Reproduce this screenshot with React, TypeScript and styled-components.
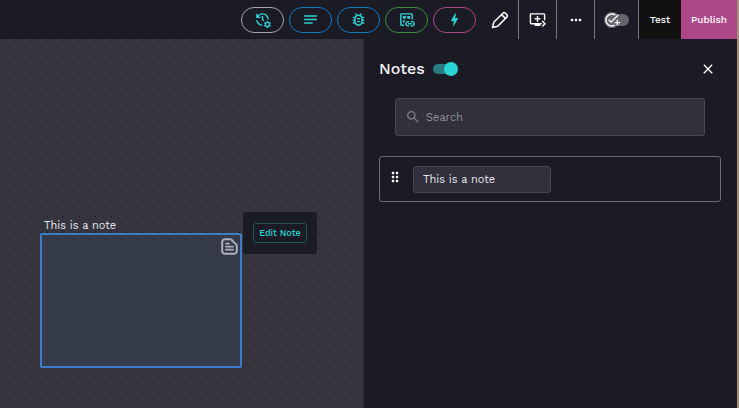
import React from 'react';
import styled, { createGlobalStyle } from 'styled-components';
import {
  MdManageHistory,
  MdNotes,
  MdOutlineBugReport,
  MdOutlineDatasetLinked,
  MdBolt,
  MdQueuePlayNext,
  MdMoreHoriz,
  MdAddTask,
  MdSearch,
  MdClose,
  MdDragIndicator,
} from 'react-icons/md';

const GlobalStyle = createGlobalStyle`
  * { box-sizing: border-box; }
  body { margin: 0; background: #1b1b25; }
  button, input { font-family: inherit; margin: 0; }
  button { cursor: pointer; padding: 0; }
`;

const Page = styled.div`
  display: flex;
  flex-direction: column;
  min-height: 100vh;
  overflow: hidden;
  color: #f4f4f8;
  background: #1b1b25;
  border-right: 2px solid #a09373;
  font-family: 'Work Sans', Inter, 'Liberation Sans', sans-serif;
`;

const Header = styled.header`
  display: flex;
  justify-content: flex-end;
  height: 39px;
`;

const Pills = styled.div`
  display: flex;
  align-items: center;
  gap: 5px;
`;

const Pill = styled.button<{ $color: string }>`
  display: grid;
  place-items: center;
  width: 43px;
  height: 26px;
  border: 1px solid ${(p) => p.$color};
  border-radius: 13px;
  background: transparent;
  color: #2ad4d4;
`;

const Tool = styled.button<{ $wide?: boolean }>`
  display: grid;
  place-items: center;
  width: ${(p) => (p.$wide ? 44 : 38)}px;
  border: 0;
  border-right: 1px solid #777781;
  background: transparent;
  color: #fff;
`;

const PencilTool = styled(Tool)`
  margin-left: 5px;
`;

const TaskSwitch = styled.span`
  display: flex;
  align-items: center;
  width: 24px;
  height: 12px;
  border-radius: 6px;
  background: #64646a;
`;

const TaskKnob = styled.span`
  display: grid;
  place-items: center;
  flex: none;
  width: 16px;
  height: 16px;
  margin-left: -1px;
  border-radius: 50%;
  background: #66666c;
`;

const Action = styled.button<{ $primary?: boolean }>`
  width: ${(p) => (p.$primary ? 56 : 42)}px;
  border: 0;
  background: ${(p) => (p.$primary ? '#ad4788' : '#111112')};
  color: #fff;
  font-size: 10px;
  font-weight: 500;
`;

const Body = styled.div`
  display: flex;
  flex: 1;
`;

const Canvas = styled.main`
  position: relative;
  flex: 1;
  background-color: #36353f;
  background-image:
    conic-gradient(from 90deg at 15px 15px, #1c1c26 90deg, transparent 0),
    conic-gradient(from 90deg at 14px 14px, #2d2c37 90deg, transparent 0);
  background-position: 0 2px;
  background-size: 16px 16px;
`;

const NoteNode = styled.section`
  position: absolute;
  left: 40px;
  top: 178px;
  width: 202px;
`;

const NoteLabel = styled.div`
  padding: 1px 0 0 4px;
  font-size: 11px;
  line-height: 15px;
  color: #e6e6ea;
`;

const NoteArea = styled.div`
  display: flex;
  justify-content: flex-end;
  height: 135px;
  padding: 3px 2px;
  border: 2px solid #3d7dc8;
  border-radius: 2px;
  background: rgba(52, 66, 84, 0.5);
  color: #aeb0bd;
`;

const NodeMenu = styled.div`
  position: absolute;
  left: 243px;
  top: 173px;
  padding: 11px 10px;
  border-radius: 3px;
  background: #1b1b25;
`;

const EditButton = styled.button`
  display: block;
  width: 54px;
  height: 20px;
  border: 1px solid #23555e;
  border-radius: 3px;
  background: transparent;
  color: #2ad4d4;
  font-size: 9px;
  font-weight: 500;
  white-space: nowrap;
`;

const Panel = styled.aside`
  width: 374px;
  padding: 19px 16px 0 15px;
  border-left: 1px solid #2c2b36;
  background: #1b1b25;
`;

const PanelHeader = styled.div`
  display: flex;
  align-items: center;
  height: 22px;
  padding-right: 5px;
`;

const Title = styled.h2`
  margin: 0 8px 0 0;
  font-size: 16px;
  line-height: 22px;
  font-weight: 500;
`;

const Toggle = styled.input`
  appearance: none;
  position: relative;
  width: 25px;
  height: 14px;
  margin: 0;
  &::before {
    content: '';
    position: absolute;
    inset: 2px 1px 2px 0;
    border-radius: 5px;
    background: #2a7c82;
  }
  &::after {
    content: '';
    position: absolute;
    right: 0;
    top: 0;
    width: 14px;
    height: 14px;
    border-radius: 50%;
    background: #2ad4d4;
  }
  &:not(:checked)::after {
    right: auto;
    left: 0;
  }
`;

const CloseButton = styled.button`
  display: grid;
  place-items: center;
  margin-left: auto;
  border: 0;
  background: transparent;
  color: #fff;
`;

const SearchBox = styled.label`
  display: flex;
  align-items: center;
  gap: 5px;
  height: 38px;
  margin: 18px 16px 0;
  padding: 0 9px;
  border: 1px solid #484753;
  border-radius: 3px;
  background: #32303d;
  color: #7f7e88;
`;

const SearchInput = styled.input`
  flex: 1;
  min-width: 0;
  padding: 0;
  border: 0;
  outline: 0;
  background: transparent;
  color: #e6e6ea;
  font-size: 11px;
  &::placeholder {
    color: #8f8e98;
    opacity: 1;
  }
`;

const NoteRow = styled.div`
  display: flex;
  align-items: center;
  gap: 10px;
  height: 46px;
  margin-top: 20px;
  padding: 0 7px;
  border: 1px solid #6b6b77;
  border-radius: 3px;
`;

const DragHandle = styled.button`
  display: flex;
  align-items: center;
  justify-content: center;
  width: 16px;
  height: 22px;
  padding-bottom: 4px;
  border: 0;
  background: transparent;
  color: #fff;
`;

const NoteInput = styled.input`
  width: 138px;
  height: 27px;
  padding: 0 9px;
  border: 1px solid #484753;
  border-radius: 3px;
  background: #32303d;
  color: #e6e6ea;
  font-size: 11px;
`;

const Pencil = () => (
  <svg width="18" height="18" viewBox="0 0 18 18" fill="none" stroke="currentColor" strokeWidth="1.5" strokeLinejoin="round" aria-hidden="true">
    <path d="M1.5 16.5l1.3-5.2L11.9 2.2c.8-.8 1.6-.8 2.2-.2l1.9 1.9c.6.6.6 1.4-.2 2.2l-9.1 9.1z" />
    <path d="M10.6 3.6l3.8 3.8" />
  </svg>
);

const NoteIcon = () => (
  <svg width="17" height="17" viewBox="0 0 17 17" fill="none" stroke="currentColor" strokeWidth="2" strokeLinecap="round" strokeLinejoin="round" aria-hidden="true">
    <path d="M4 1.2h5.2c.5 0 .9.2 1.2.5l4.9 4.9c.3.3.5.7.5 1.2v5.2a2.8 2.8 0 0 1-2.8 2.8H4A2.8 2.8 0 0 1 1.2 13V4A2.8 2.8 0 0 1 4 1.2z" />
    <path d="M5 5.6h3M5 8.6h7M5 11.7h7" strokeWidth="1.8" />
  </svg>
);

export default function App() {
  return (
    <Page>
      <GlobalStyle />
      <Header>
        <Pills>
          <Pill $color="#a6a6ac" aria-label="History"><MdManageHistory size={17} /></Pill>
          <Pill $color="#1379bd" aria-label="Logs"><MdNotes size={17} /></Pill>
          <Pill $color="#1379bd" aria-label="Debug"><MdOutlineBugReport size={17} /></Pill>
          <Pill $color="#3c8d3b" aria-label="Data"><MdOutlineDatasetLinked size={17} /></Pill>
          <Pill $color="#ad4788" aria-label="Actions"><MdBolt size={17} /></Pill>
        </Pills>
        <PencilTool aria-label="Edit"><Pencil /></PencilTool>
        <Tool aria-label="Add screen"><MdQueuePlayNext size={17} /></Tool>
        <Tool aria-label="More"><MdMoreHoriz size={16} /></Tool>
        <Tool $wide aria-label="Tasks">
          <TaskSwitch><TaskKnob><MdAddTask size={16} /></TaskKnob></TaskSwitch>
        </Tool>
        <Action>Test</Action>
        <Action $primary>Publish</Action>
      </Header>
      <Body>
        <Canvas>
          <NoteNode>
            <NoteLabel>This is a note</NoteLabel>
            <NoteArea><NoteIcon /></NoteArea>
          </NoteNode>
          <NodeMenu><EditButton>Edit Note</EditButton></NodeMenu>
        </Canvas>
        <Panel>
          <PanelHeader>
            <Title>Notes</Title>
            <Toggle type="checkbox" defaultChecked aria-label="Show notes" />
            <CloseButton aria-label="Close"><MdClose size={16} /></CloseButton>
          </PanelHeader>
          <SearchBox>
            <MdSearch size={16} />
            <SearchInput type="text" placeholder="Search" aria-label="Search" />
          </SearchBox>
          <NoteRow>
            <DragHandle aria-label="Reorder"><MdDragIndicator size={16} /></DragHandle>
            <NoteInput type="text" defaultValue="This is a note" aria-label="Note title" />
          </NoteRow>
        </Panel>
      </Body>
    </Page>
  );
}
